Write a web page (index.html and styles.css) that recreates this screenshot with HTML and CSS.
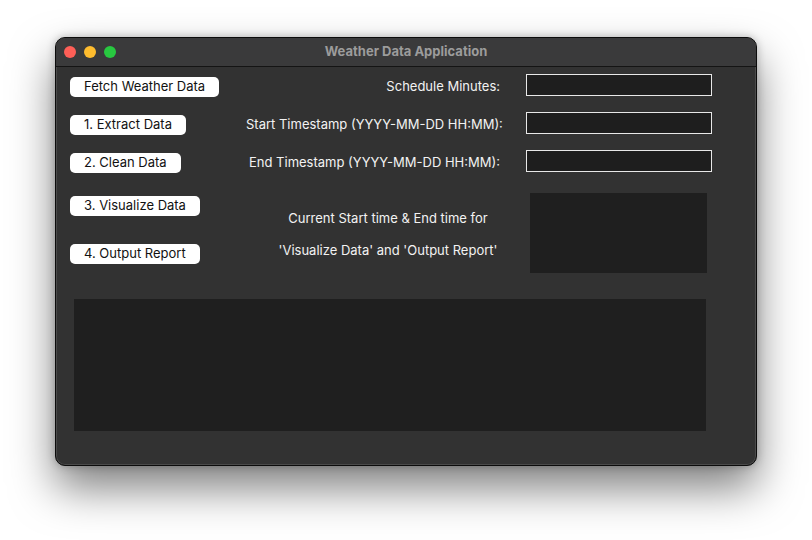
FILE: index.html
```html
<!DOCTYPE html>
<html>
<head>
<meta charset="utf-8">
<link rel="stylesheet" href="styles.css">
</head>
<body>
<div class="window">
  <div class="titlebar">
    <div class="lights">
      <span class="light red"></span>
      <span class="light yellow"></span>
      <span class="light green"></span>
    </div>
    <div class="title">Weather Data Application</div>
  </div>
  <div class="content">
    <div class="top-grid">
      <div class="cell"><button class="btn">Fetch Weather Data</button></div>
      <div class="label">Schedule Minutes:</div>
      <div class="cell"><div class="entry"></div></div>

      <div class="cell"><button class="btn">1. Extract Data</button></div>
      <div class="label">Start Timestamp (YYYY-MM-DD HH:MM):</div>
      <div class="cell"><div class="entry"></div></div>

      <div class="cell"><button class="btn">2. Clean Data</button></div>
      <div class="label">End Timestamp (YYYY-MM-DD HH:MM):</div>
      <div class="cell"><div class="entry"></div></div>
    </div>
    <div class="lower">
      <div class="lower-buttons">
        <button class="btn">3. Visualize Data</button>
        <button class="btn">4. Output Report</button>
      </div>
      <div class="current">
        <div>Current Start time &amp; End time for</div>
        <div>'Visualize Data' and 'Output Report'</div>
      </div>
      <div class="time-box"></div>
    </div>
    <div class="output"></div>
  </div>
</div>
</body>
</html>
```
FILE: styles.css
```css
* { box-sizing: border-box; }
html, body { margin: 0; padding: 0; }
body {
  background: #ffffff;
  width: 812px;
  height: 540px;
  overflow: hidden;
  padding: 37px 0 0 55px;
  font-family: "Inter", "Liberation Sans", sans-serif;
}
.window {
  width: 702px;
  height: 429px;
  background: #323232;
  border: 1px solid #0c0c0c;
  border-radius: 10px;
  box-shadow: inset 0 0 0 1px rgba(255,255,255,0.12), 0 22px 44px rgba(0,0,0,0.5), 0 0 8px rgba(0,0,0,0.25);
  overflow: hidden;
  display: flex;
  flex-direction: column;
}
.titlebar {
  height: 29px;
  flex: none;
  background: #3a3a3b;
  border-bottom: 1px solid #141414;
  display: flex;
  align-items: center;
  position: relative;
}
.lights {
  display: flex;
  gap: 8px;
  padding-left: 8px;
}
.light {
  width: 12px;
  height: 12px;
  border-radius: 50%;
  display: block;
}
.red { background: #fe5f57; }
.yellow { background: #febc2e; }
.green { background: #28c840; }
.title {
  position: absolute;
  left: 0;
  right: 0;
  top: 0;
  line-height: 26px;
  text-align: center;
  font-weight: 700;
  font-size: 13px;
  color: #9c9c9c;
}
.content {
  flex: 1;
  padding: 0 0 34px 14px;
  color: #f2f2f2;
  font-size: 13px;
}
.top-grid {
  display: grid;
  grid-template-columns: 150px 254px 186px;
  grid-auto-rows: 38px;
  column-gap: 26px;
  align-items: center;
}
.cell { display: flex; align-items: center; }
.label {
  text-align: right;
  white-space: nowrap;
  margin-top: -1px;
}
.btn {
  font-family: inherit;
  font-size: 13px;
  color: #111;
  background: #ffffff;
  border: none;
  border-radius: 5px;
  height: 20px;
  padding: 0 14px 1px;
  line-height: 19px;
  margin-top: 2px;
  white-space: nowrap;
}
.entry {
  width: 186px;
  height: 22px;
  background: #1e1e1e;
  border: 1px solid #e8e8e8;
  margin-top: -2px;
}
.lower {
  display: grid;
  grid-template-columns: 200px 236px 1fr;
  align-items: start;
}
.lower-buttons {
  display: flex;
  flex-direction: column;
  align-items: flex-start;
  gap: 28px;
  padding-top: 15px;
}
.lower-buttons .btn { margin-top: 0; }
.current {
  padding-top: 21px;
  line-height: 32px;
  text-align: center;
  white-space: nowrap;
}
.time-box {
  margin-top: 12px;
  margin-left: 24px;
  width: 177px;
  height: 80px;
  background: #1f1f1f;
}
.output {
  margin-top: 26px;
  margin-left: 4px;
  width: 632px;
  height: 132px;
  background: #1f1f1f;
}
```
